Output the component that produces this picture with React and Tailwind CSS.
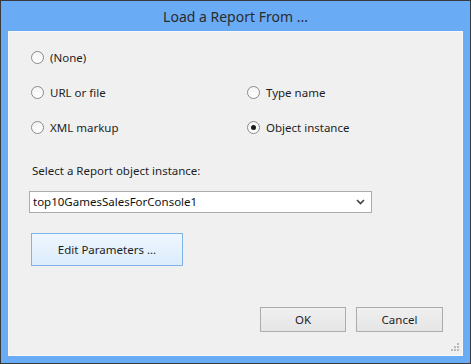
import React from "react";

function Radio({ label, checked }) {
  return (
    <label className="flex items-center gap-[6px] h-[35px]">
      <span className="w-[13px] h-[13px] rounded-full border border-[#8a8a8a] bg-gradient-to-b from-[#f4f4f4] to-white flex items-center justify-center">
        {checked && <span className="w-[5px] h-[5px] rounded-full bg-[#1a1a1a]" />}
      </span>
      <span className="text-[11.5px] text-[#1e1e1e] leading-none">{label}</span>
    </label>
  );
}

function Grip() {
  const dots = [
    [6, 0],
    [3, 3],
    [6, 3],
    [0, 6],
    [3, 6],
    [6, 6],
  ];
  return (
    <svg width="9" height="9" className="self-end mb-[3px] mr-[2px]">
      {dots.map(([x, y], i) => (
        <rect key={i} x={x} y={y} width="2" height="2" fill="#b8b8b8" />
      ))}
    </svg>
  );
}

export default function App() {
  return (
    <div
      className="w-[471px] h-[364px] border border-[#3a3a3a] bg-[#6aabf5] flex flex-col"
      style={{ fontFamily: '"Noto Sans", "Open Sans", sans-serif' }}
    >
      <div className="h-[30px] flex items-center justify-center text-[14px] text-[#2b2b2b]">
        Load a Report From ...
      </div>
      <div className="flex-1 mx-[7px] mb-[7px] bg-[#f0f0f0] border border-[#f8f8f8] flex flex-col">
        <div className="pl-[22px] pr-[19px] pt-[8px] flex flex-col flex-1">
          <div className="grid grid-cols-[216px_1fr]">
            <Radio label="(None)" />
            <div />
            <Radio label="URL or file" />
            <Radio label="Type name" />
            <Radio label="XML markup" />
            <Radio label="Object instance" checked />
          </div>

          <div className="mt-[18px] text-[11.5px] text-[#1e1e1e] leading-[16px] pl-[1px]">
            Select a Report object instance:
          </div>

          <div className="mt-[12px] -ml-[2px] w-[343px] h-[22px] bg-white border border-[#acacac] flex items-center justify-between pl-[3px] pr-[6px]">
            <span className="text-[11.5px] text-[#111]">top10GamesSalesForConsole1</span>
            <svg width="9" height="6" viewBox="0 0 9 6">
              <path d="M1 1 L4.5 4.5 L8 1" stroke="#404040" strokeWidth="1.6" fill="none" />
            </svg>
          </div>

          <button className="mt-[20px] w-[152px] h-[33px] border border-[#7eb4ea] bg-gradient-to-b from-[#eef6fd] to-[#dcecfc] text-[11.5px] text-[#1e1e1e]">
            Edit Parameters ...
          </button>

          <div className="mt-[41px] flex justify-end gap-[10px]">
            <button className="w-[86px] h-[25px] border border-[#acacac] bg-gradient-to-b from-[#f0f0f0] to-[#e5e5e5] text-[11.5px] text-[#1e1e1e]">
              OK
            </button>
            <button className="w-[87px] h-[25px] border border-[#acacac] bg-gradient-to-b from-[#f0f0f0] to-[#e5e5e5] text-[11.5px] text-[#1e1e1e]">
              Cancel
            </button>
          </div>
          <div className="flex-1" />
        </div>
        <div className="flex justify-end -mt-[12px]">
          <Grip />
        </div>
      </div>
    </div>
  );
}
